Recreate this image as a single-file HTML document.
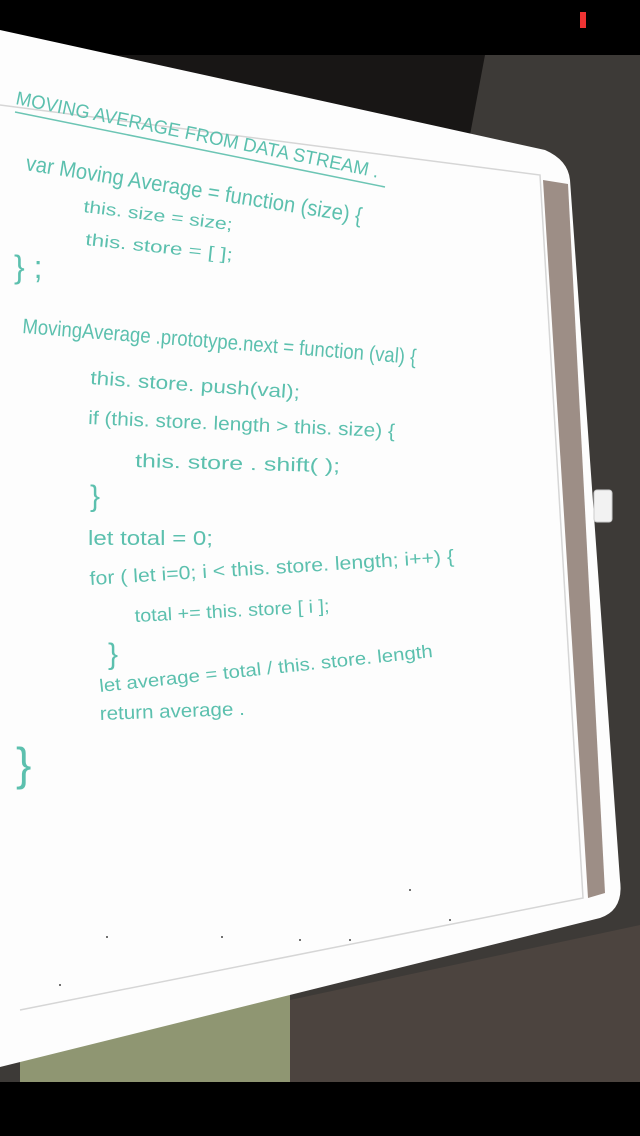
<!DOCTYPE html>
<html><head><meta charset="utf-8"><style>
html,body{margin:0;padding:0;width:640px;height:1136px;overflow:hidden;background:#000}
svg{display:block}
text{font-family:"Liberation Sans Narrow","Liberation Sans",sans-serif;fill:#5cc0ae}
</style></head><body>
<svg width="640" height="1136" viewBox="0 0 640 1136">
<rect width="640" height="1136" fill="#000"/>
<rect x="0" y="55" width="640" height="1027" fill="#3d3a37"/>
<polygon points="0,55 485,55 470,135 0,90" fill="#181615"/>
<polygon points="290,1000 640,925 640,1082 290,1082" fill="#4c443f"/>
<polygon points="20,1010 290,960 290,1082 20,1082" fill="#8f9672"/>
<path d="M0,30 L545,150 Q568,160 570,180 L620,880 Q624,910 600,918 L0,1067 Z" fill="#fdfdfd"/>
<polygon points="543,180 568,184 605,893 588,898" fill="#9d8e86"/>
<polyline points="0,105 540,175 583,898 20,1010" fill="none" stroke="#d6d6d6" stroke-width="1.5"/>
<rect x="594" y="490" width="18" height="32" rx="3" fill="#f2f2f2" stroke="#ccc"/>
<rect x="580" y="12" width="6" height="16" fill="#e33"/>

<text transform="translate(15,104) rotate(11.5)" font-size="19" textLength="370" lengthAdjust="spacingAndGlyphs">MOVING AVERAGE FROM DATA STREAM .</text>
<line x1="15" y1="112" x2="385" y2="187" stroke="#6cc5b4" stroke-width="1.5"/>
<text transform="translate(25,170) rotate(9)" font-size="22" textLength="340" lengthAdjust="spacingAndGlyphs">var Moving Average = function (size) {</text>
<text transform="translate(83,212) rotate(7)" font-size="17" textLength="150" lengthAdjust="spacingAndGlyphs">this. size = size;</text>
<text transform="translate(85,245) rotate(6)" font-size="17" textLength="148" lengthAdjust="spacingAndGlyphs">this. store = [ ];</text>
<text x="14" y="278" font-size="32">} ;</text>
<text transform="translate(22,333) rotate(4.5)" font-size="21" textLength="395" lengthAdjust="spacingAndGlyphs">MovingAverage .prototype.next = function (val) {</text>
<text transform="translate(90,384) rotate(4)" font-size="19" textLength="210" lengthAdjust="spacingAndGlyphs">this. store. push(val);</text>
<text transform="translate(88,424) rotate(2.5)" font-size="19" textLength="307" lengthAdjust="spacingAndGlyphs">if (this. store. length &gt; this. size) {</text>
<text transform="translate(135,467) rotate(1.5)" font-size="19" textLength="205" lengthAdjust="spacingAndGlyphs">this. store . shift( );</text>
<text x="90" y="506" font-size="30">}</text>
<text x="88" y="545" font-size="20" textLength="125" lengthAdjust="spacingAndGlyphs">let total = 0;</text>
<text transform="translate(90,585) rotate(-3.5)" font-size="19" textLength="365" lengthAdjust="spacingAndGlyphs">for ( let i=0;  i &lt; this. store. length;  i++) {</text>
<text transform="translate(135,622) rotate(-3)" font-size="18" textLength="195" lengthAdjust="spacingAndGlyphs">total += this. store [ i ];</text>
<text x="108" y="664" font-size="30">}</text>
<text transform="translate(100,692) rotate(-6)" font-size="18" textLength="335" lengthAdjust="spacingAndGlyphs">let average = total / this. store. length</text>
<text transform="translate(100,720) rotate(-2)" font-size="19" textLength="145" lengthAdjust="spacingAndGlyphs">return average .</text>
<text x="16" y="780" font-size="46">}</text>

<g fill="#444">
<circle cx="107" cy="937" r="1"/><circle cx="222" cy="937" r="1"/><circle cx="410" cy="890" r="1"/><circle cx="300" cy="940" r="1"/><circle cx="60" cy="985" r="1"/><circle cx="350" cy="940" r="1"/><circle cx="450" cy="920" r="1"/>
</g>
</svg>
</body></html>
